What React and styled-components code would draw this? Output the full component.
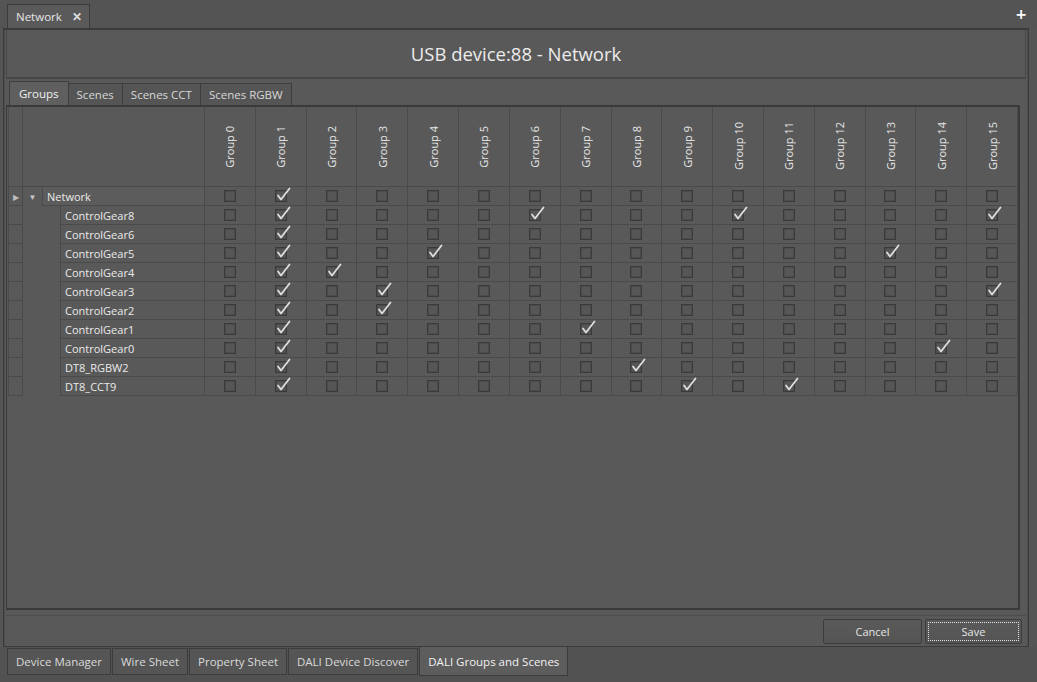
import styled, { createGlobalStyle } from "styled-components";

const GlobalStyle = createGlobalStyle`
  html, body {
    margin: 0;
    padding: 0;
    background: #555555;
  }

  body {
    font-family: "Open Sans", "Noto Sans", sans-serif;
    font-size: 11px;
    color: #e4e4e4;
  }
`;

const GROUPS = Array.from({ length: 16 }, (_, i) => `Group ${i}`);

const NODES = [
  { name: "Network", level: 0, checked: [1], current: true },
  { name: "ControlGear8", level: 1, checked: [1, 6, 10, 15] },
  { name: "ControlGear6", level: 1, checked: [1] },
  { name: "ControlGear5", level: 1, checked: [1, 4, 13] },
  { name: "ControlGear4", level: 1, checked: [1, 2] },
  { name: "ControlGear3", level: 1, checked: [1, 3, 15] },
  { name: "ControlGear2", level: 1, checked: [1, 3] },
  { name: "ControlGear1", level: 1, checked: [1, 7] },
  { name: "ControlGear0", level: 1, checked: [1, 14] },
  { name: "DT8_RGBW2", level: 1, checked: [1, 8] },
  { name: "DT8_CCT9", level: 1, checked: [1, 9, 11] },
];

const VIEWS = ["Device Manager", "Wire Sheet", "Property Sheet", "DALI Device Discover", "DALI Groups and Scenes"];
const PAGES = ["Groups", "Scenes", "Scenes CCT", "Scenes RGBW"];

const COLUMNS = "15px 182px repeat(16, 1fr)";

/* ---------- shell ---------- */

const Shell = styled.div`
  /* Layout */
  display: flex;
  flex-direction: column;

  /* Box */
  width: 1037px;
  height: 682px;
  overflow: hidden;
`;

const DocBar = styled.div`
  display: flex;
  align-items: flex-end;
  justify-content: space-between;
  height: 28px;
  padding: 0 10px 0 7px;
  box-sizing: border-box;
  background: #545454;
`;

const DocTab = styled.div`
  display: flex;
  align-items: center;
  gap: 10px;
  height: 24px;
  padding: 0 7px 0 8px;
  box-sizing: border-box;
  border: 1px solid #3c3c3c;
  border-bottom: none;
  background: #5a5a5a;
  font-size: 11.5px;
  color: #e6e6e6;
`;

const CloseMark = styled.span`
  font-size: 12px;
  font-weight: 700;
  color: #dddddd;
  line-height: 1;
`;

const PlusMark = styled.span`
  align-self: center;
  font-family: "DejaVu Sans", sans-serif;
  font-size: 14px;
  font-weight: 700;
  color: #ffffff;
  line-height: 1;
`;

const Frame = styled.div`
  display: flex;
  flex-direction: column;
  flex: 1;
  min-height: 0;
  margin: 0 8px 0 3px;
  border: 1px solid #3b3b3b;
  border-top: 2px solid #3b3b3b;
  box-shadow: inset 1px 0 0 #4d4d4d, inset -1px 0 0 #4d4d4d;
  padding: 0 2px;
  background: #595959;
`;

const TitleBar = styled.div`
  display: flex;
  align-items: center;
  justify-content: center;
  height: 47px;
  flex: none;
  border: 1px solid #484848;
  border-top: none;
  border-bottom: 2px solid #474747;
  font-size: 18.5px;
  color: #ececec;
`;

const PageTabs = styled.div`
  display: flex;
  align-items: flex-end;
  height: 26px;
  flex: none;
  padding-left: 3px;
`;

const PageTab = styled.div`
  display: flex;
  align-items: center;
  height: ${(p) => (p.$active ? "23px" : "21px")};
  padding: 0 ${(p) => (p.$active ? "9px" : "8px")};
  border: 1px solid #3e3e3e;
  border-bottom: none;
  margin-right: -1px;
  background: ${(p) => (p.$active ? "#5f5f5f" : "#555555")};
  font-size: 11.5px;
  color: ${(p) => (p.$active ? "#f0f0f0" : "#d8d8d8")};
`;

/* ---------- grid ---------- */

const GridPanel = styled.div`
  flex: 1;
  min-height: 0;
  margin-right: 6px;
  border: 2px solid #3a3a3a;
  border-left-width: 1px;
  padding-left: 1px;
  background: #595959;
`;

const GridRow = styled.div`
  display: grid;
  grid-template-columns: ${COLUMNS};
  height: ${(p) => p.$height}px;
`;

const RowHeader = styled.div`
  display: flex;
  align-items: center;
  justify-content: center;
  border-right: 1px solid #4a4a4a;
  border-bottom: 1px solid #4a4a4a;
  border-left: 1px solid #4a4a4a;
  color: #bdbdbd;
  font-size: 8px;
`;

const HeaderCell = styled.div`
  display: flex;
  align-items: center;
  justify-content: center;
  border-right: 1px solid #4a4a4a;
  border-bottom: 1px solid #4a4a4a;
`;

const GroupLabel = styled.span`
  writing-mode: vertical-rl;
  transform: rotate(180deg);
  font-size: 11px;
  color: #e8e8e8;
  white-space: nowrap;
`;

const TreeCell = styled.div`
  display: flex;
  border-right: 1px solid #4a4a4a;
`;

const Indent = styled.div`
  display: flex;
  align-items: center;
  justify-content: center;
  width: ${(p) => p.$width}px;
  flex: none;
  color: #c8c8c8;
  font-size: 8px;
`;

const NodeName = styled.div`
  display: flex;
  align-items: center;
  flex: 1;
  padding-left: 4px;
  border-left: 1px solid #4a4a4a;
  border-bottom: 1px solid #4a4a4a;
  background: ${(p) => (p.$current ? "#5c5c5c" : "transparent")};
  font-size: 11px;
  color: #eaeaea;
  white-space: nowrap;
`;

const CheckCell = styled.div`
  display: flex;
  align-items: center;
  justify-content: center;
  border-right: 1px solid #4a4a4a;
  border-bottom: 1px solid #4a4a4a;
`;

const Box = styled.span`
  position: relative;
  width: 10px;
  height: 10px;
  border: 1px solid #3a3a3a;
  box-shadow: inset 0 0 0 1px #4c4c4c;
  background: #565656;
`;

const Tick = styled.svg`
  position: absolute;
  left: 0;
  top: -4px;
  overflow: visible;
`;

function Check({ on }) {
  return (
    <Box>
      {on && (
        <Tick width="14" height="14" viewBox="0 0 14 14">
          <path
            d="M2 8.5 L5 12.5 L13.5 1.5"
            fill="none"
            stroke="#dedede"
            strokeWidth="1.8"
            strokeLinecap="round"
            strokeLinejoin="round"
          />
        </Tick>
      )}
    </Box>
  );
}

/* ---------- footer ---------- */

const ButtonBar = styled.div`
  display: flex;
  justify-content: flex-end;
  align-items: flex-start;
  gap: 3px;
  height: 27px;
  flex: none;
  margin-top: 5px;
  padding: 3px 4px 0 0;
  border-top: 1px solid #4c4c4c;
`;

const Button = styled.button`
  position: relative;
  width: ${(p) => p.$width}px;
  height: 25px;
  border: 1px solid #3c3c3c;
  border-radius: 2px;
  background: linear-gradient(#5a5a5a, #545454);
  font-family: inherit;
  font-size: 11px;
  color: #e6e6e6;

  &::after {
    content: "";
    display: ${(p) => (p.$focused ? "block" : "none")};
    position: absolute;
    inset: 2px;
    border: 1px dotted #e0e0e0;
  }
`;

const ViewBar = styled.div`
  display: flex;
  align-items: flex-start;
  height: 35px;
  flex: none;
  padding-left: 7px;
  box-sizing: border-box;
  background: #525252;
`;

const ViewTab = styled.div`
  display: flex;
  align-items: center;
  height: ${(p) => (p.$active ? "28px" : "25px")};
  margin-top: ${(p) => (p.$active ? "0" : "1px")};
  padding: 0 8px;
  border: 1px solid #3c3c3c;
  border-top: ${(p) => (p.$active ? "none" : "1px solid #3c3c3c")};
  margin-right: 1px;
  background: ${(p) => (p.$active ? "#5d5d5d" : "#555555")};
  font-size: 11.5px;
  color: ${(p) => (p.$active ? "#f2f2f2" : "#dadada")};
`;

function NodeRow({ node }) {
  return (
    <GridRow $height={19}>
      <RowHeader>{node.current ? "▶" : ""}</RowHeader>
      <TreeCell>
        {node.level === 0 ? (
          <Indent $width={19}>▼</Indent>
        ) : (
          <Indent $width={37} />
        )}
        <NodeName $current={node.current}>{node.name}</NodeName>
      </TreeCell>
      {GROUPS.map((g, i) => (
        <CheckCell key={g}>
          <Check on={node.checked.includes(i)} />
        </CheckCell>
      ))}
    </GridRow>
  );
}

export default function App() {
  return (
    <Shell>
      <GlobalStyle />
      <DocBar>
        <DocTab>
          Network <CloseMark>✕</CloseMark>
        </DocTab>
        <PlusMark>+</PlusMark>
      </DocBar>

      <Frame>
        <TitleBar>USB device:88 - Network</TitleBar>

        <PageTabs>
          {PAGES.map((p, i) => (
            <PageTab key={p} $active={i === 0}>
              {p}
            </PageTab>
          ))}
        </PageTabs>

        <GridPanel>
          <GridRow $height={80}>
            <RowHeader />
            <HeaderCell />
            {GROUPS.map((g) => (
              <HeaderCell key={g}>
                <GroupLabel>{g}</GroupLabel>
              </HeaderCell>
            ))}
          </GridRow>
          {NODES.map((n) => (
            <NodeRow key={n.name} node={n} />
          ))}
        </GridPanel>

        <ButtonBar>
          <Button $width={99}>Cancel</Button>
          <Button $width={97} $focused>
            Save
          </Button>
        </ButtonBar>
      </Frame>

      <ViewBar>
        {VIEWS.map((v, i) => (
          <ViewTab key={v} $active={i === VIEWS.length - 1}>
            {v}
          </ViewTab>
        ))}
      </ViewBar>
    </Shell>
  );
}
